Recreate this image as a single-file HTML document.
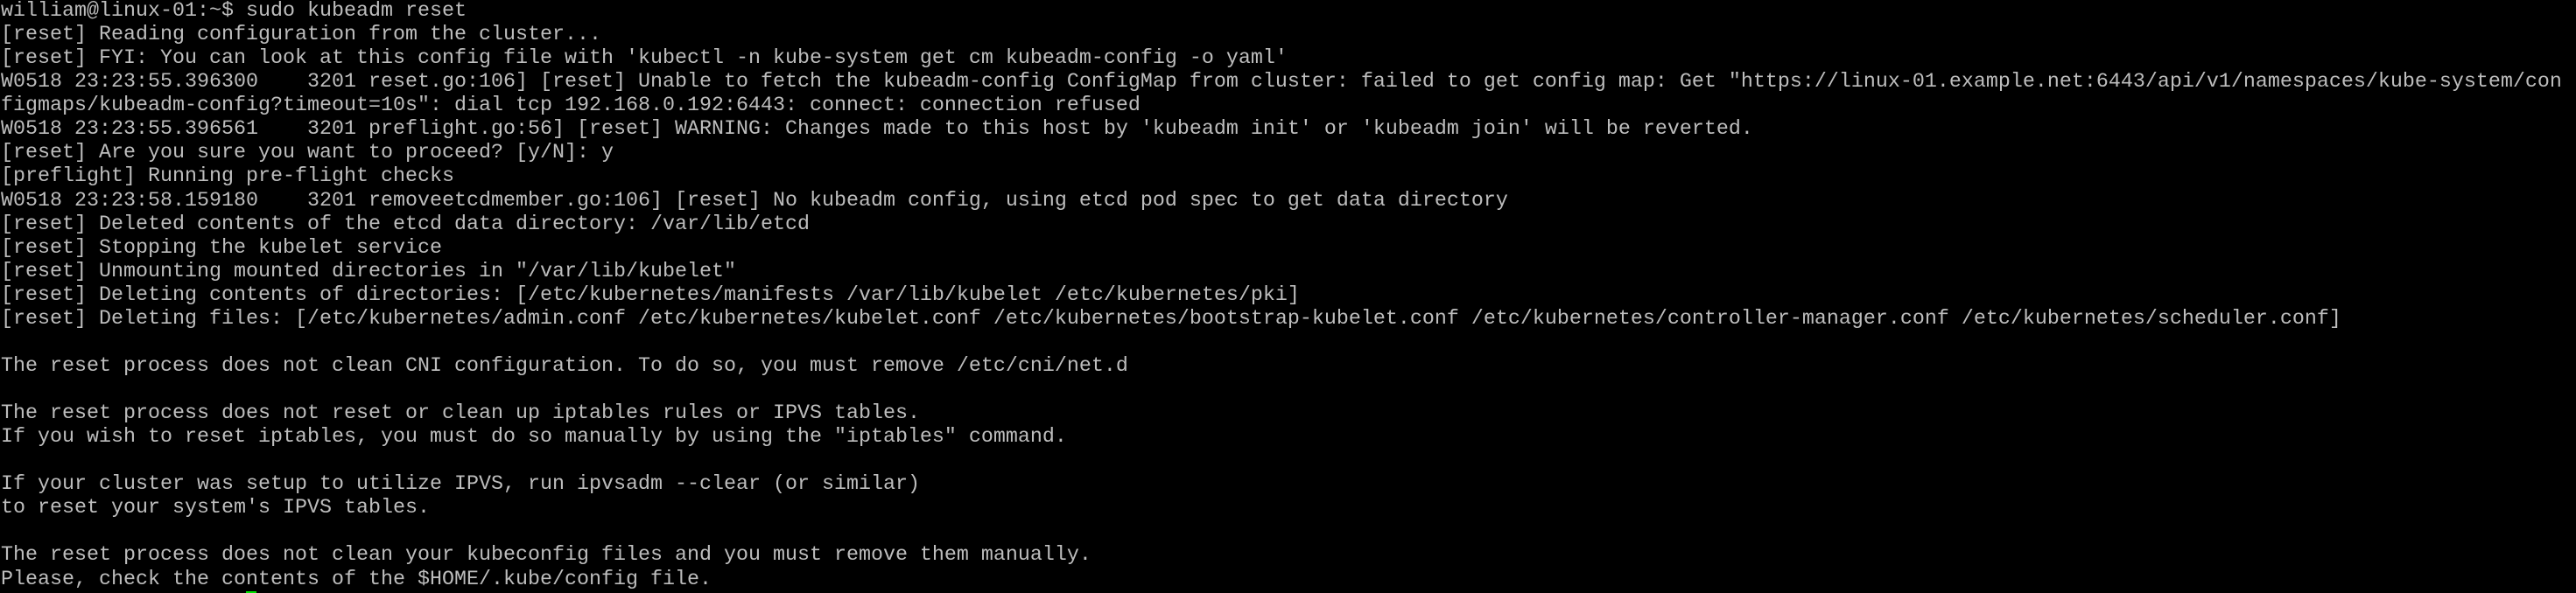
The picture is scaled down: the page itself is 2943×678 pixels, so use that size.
<!DOCTYPE html>
<html><head><meta charset="utf-8"><style>
html,body{margin:0;padding:0;background:#000;width:2943px;height:678px;overflow:hidden}
pre{margin:0;padding:0 0 0 1px;font-family:"Liberation Mono",monospace;font-size:23.33px;line-height:27.07px;color:#bdbdbd;white-space:pre;position:relative}
.cur{position:absolute;left:281px;top:676px;width:12px;height:22px;border:2px solid #00e000;box-sizing:border-box}
</style></head><body><pre>william@linux-01:~$ sudo kubeadm reset
[reset] Reading configuration from the cluster...
[reset] FYI: You can look at this config file with 'kubectl -n kube-system get cm kubeadm-config -o yaml'
W0518 23:23:55.396300    3201 reset.go:106] [reset] Unable to fetch the kubeadm-config ConfigMap from cluster: failed to get config map: Get "https://linux-01.example.net:6443/api/v1/namespaces/kube-system/con
figmaps/kubeadm-config?timeout=10s": dial tcp 192.168.0.192:6443: connect: connection refused
W0518 23:23:55.396561    3201 preflight.go:56] [reset] WARNING: Changes made to this host by 'kubeadm init' or 'kubeadm join' will be reverted.
[reset] Are you sure you want to proceed? [y/N]: y
[preflight] Running pre-flight checks
W0518 23:23:58.159180    3201 removeetcdmember.go:106] [reset] No kubeadm config, using etcd pod spec to get data directory
[reset] Deleted contents of the etcd data directory: /var/lib/etcd
[reset] Stopping the kubelet service
[reset] Unmounting mounted directories in "/var/lib/kubelet"
[reset] Deleting contents of directories: [/etc/kubernetes/manifests /var/lib/kubelet /etc/kubernetes/pki]
[reset] Deleting files: [/etc/kubernetes/admin.conf /etc/kubernetes/kubelet.conf /etc/kubernetes/bootstrap-kubelet.conf /etc/kubernetes/controller-manager.conf /etc/kubernetes/scheduler.conf]

The reset process does not clean CNI configuration. To do so, you must remove /etc/cni/net.d

The reset process does not reset or clean up iptables rules or IPVS tables.
If you wish to reset iptables, you must do so manually by using the "iptables" command.

If your cluster was setup to utilize IPVS, run ipvsadm --clear (or similar)
to reset your system's IPVS tables.

The reset process does not clean your kubeconfig files and you must remove them manually.
Please, check the contents of the $HOME/.kube/config file.
william@linux-01:~$ <span class="cur"></span></pre></body></html>
